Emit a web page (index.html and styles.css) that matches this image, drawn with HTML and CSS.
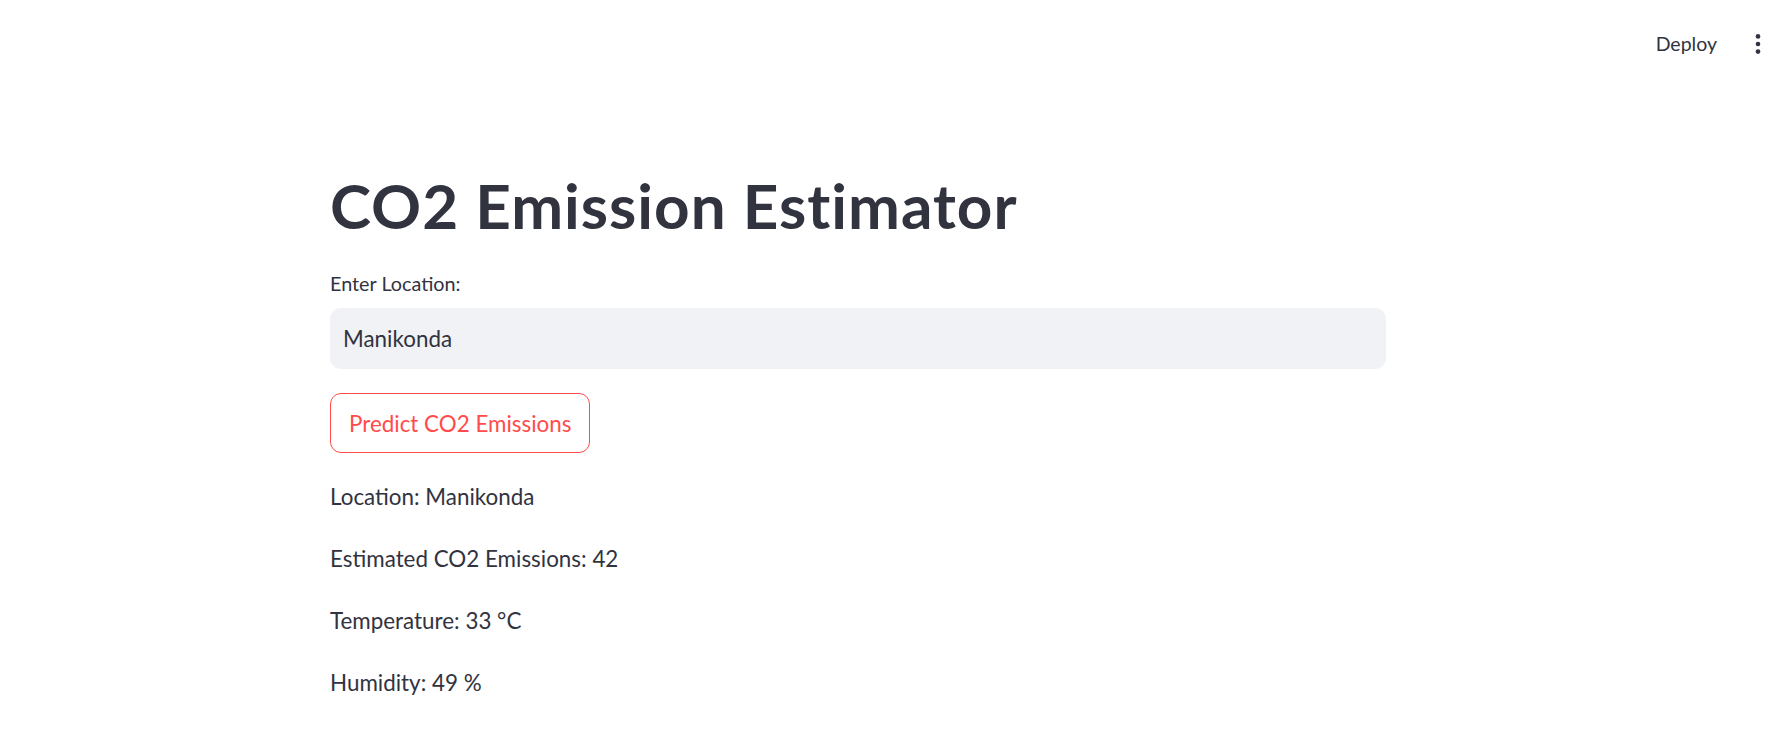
FILE: index.html
```html
<!DOCTYPE html>
<html lang="en">
<head>
<meta charset="utf-8">
<title>CO2 Emission Estimator</title>
<link rel="stylesheet" href="styles.css">
</head>
<body>
<header class="topbar">
  <button class="deploy" type="button">Deploy</button>
  <button class="menu" type="button" aria-label="Main menu">
    <svg viewBox="0 0 24 24" width="28" height="28"><circle cx="12" cy="5.5" r="2" fill="#31333F"/><circle cx="12" cy="12" r="2" fill="#31333F"/><circle cx="12" cy="18.5" r="2" fill="#31333F"/></svg>
  </button>
</header>
<main class="main">
  <div class="block">
    <h1 class="title">CO2 Emission Estimator</h1>
    <label class="label" for="loc">Enter Location:</label>
    <input class="text-input" id="loc" type="text" value="Manikonda">
    <button class="predict" type="button">Predict CO2 Emissions</button>
    <p class="line">Location: Manikonda</p>
    <p class="line">Estimated CO2 Emissions: 42</p>
    <p class="line">Temperature: 33 °C</p>
    <p class="line">Humidity: 49 %</p>
  </div>
</main>
</body>
</html>
```
FILE: styles.css
```css
* { box-sizing: border-box; }
html, body { margin: 0; padding: 0; background: #fff; }
body {
  font-family: Lato, "Noto Sans", sans-serif;
  color: #31333F;
  width: 1790px;
  height: 748px;
  overflow: hidden;
}
.topbar {
  height: 88px;
  display: flex;
  justify-content: flex-end;
  align-items: center;
  padding-right: 18px;
  gap: 27px;
}
.deploy {
  border: none;
  background: none;
  padding: 0;
  font-family: inherit;
  font-size: 19.5px;
  color: #31333F;
  line-height: 28px;
}
.menu {
  border: none;
  background: none;
  padding: 0;
  width: 28px;
  height: 28px;
  display: flex;
}
.main { padding: 80px 0 0 330px; }
.block {
  width: 1056px;
  display: flex;
  flex-direction: column;
  align-items: flex-start;
}
.title {
  margin: 0;
  font-size: 62px;
  font-weight: 700;
  line-height: 74px;
  letter-spacing: 1px;
  color: #31333F;
}
.label {
  margin-top: 27px;
  font-size: 19.8px;
  line-height: 28px;
}
.text-input {
  margin-top: 11px;
  width: 100%;
  height: 61px;
  border: none;
  border-radius: 11px;
  background: #F0F2F6;
  padding: 0 13px;
  font-family: inherit;
  font-size: 22.4px;
  color: #31333F;
  outline: none;
}
.predict {
  margin-top: 24px;
  height: 60px;
  padding: 0 18px;
  border: 1px solid #FF4B4B;
  border-radius: 11px;
  background: #fff;
  color: #FF4B4B;
  font-family: inherit;
  font-size: 22.4px;
}
.line {
  margin: 26px 0 0;
  font-size: 22.4px;
  line-height: 35px;
}
.line + .line { margin-top: 27px; }
```
